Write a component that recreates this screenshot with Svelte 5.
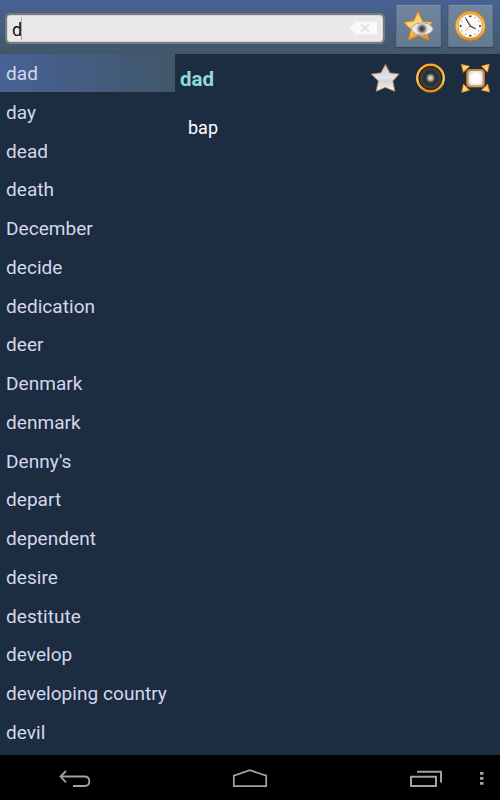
<script>
  let query = "d"
  let selected = "dad"

  const words = [
    "dad", "day", "dead", "death", "December", "decide", "dedication",
    "deer", "Denmark", "denmark", "Denny's", "depart", "dependent",
    "desire", "destitute", "develop", "developing country", "devil"
  ]

  const translations = { dad: "bap" }
  const ticks = [0, 30, 60, 90, 120, 150, 180, 210, 240, 270, 300, 330]
  const corners = [0, 90, 180, 270]
</script>

<svg class="defs" width="0" height="0">
  <defs>
    <linearGradient id="gold" x1="0" y1="0" x2="0.3" y2="1">
      <stop offset="0" stop-color="#ffb024" />
      <stop offset="0.5" stop-color="#ffda7c" />
      <stop offset="1" stop-color="#f39a1b" />
    </linearGradient>
    <linearGradient id="rim" x1="0" y1="0" x2="0" y2="1">
      <stop offset="0" stop-color="#ffa51c" />
      <stop offset="0.55" stop-color="#ffca55" />
      <stop offset="1" stop-color="#f08a10" />
    </linearGradient>
    <linearGradient id="silver" x1="0" y1="0" x2="0" y2="1">
      <stop offset="0" stop-color="#c9cacc" />
      <stop offset="0.5" stop-color="#e4e4e5" />
      <stop offset="0.6" stop-color="#d2d3d5" />
      <stop offset="1" stop-color="#f4f4f4" />
    </linearGradient>
    <radialGradient id="iris">
      <stop offset="0" stop-color="#333" />
      <stop offset="0.4" stop-color="#555" />
      <stop offset="0.65" stop-color="#999" />
      <stop offset="1" stop-color="#d8d8d8" />
    </radialGradient>
    <radialGradient id="cone">
      <stop offset="0" stop-color="#eee" />
      <stop offset="0.6" stop-color="#aaa" />
      <stop offset="1" stop-color="#666" />
    </radialGradient>
    <radialGradient id="panel">
      <stop offset="0.5" stop-color="#fff" />
      <stop offset="1" stop-color="#dcdce4" />
    </radialGradient>
  </defs>
</svg>

<div class="screen">
  <header>
    <div class="search">
      <span class="query">{query}</span><span class="caret"></span>
      <svg class="clear" width="28" height="14" viewBox="0 0 28 14">
        <path d="M0.500 7 7 0.500H28V13.500H7Z" fill="#fafafa" />
        <path d="m12 3.200 8 7.600m0-7.600-8 7.600" stroke="#dedede" stroke-width="1.600" />
      </svg>
    </div>
    <button class="tool" aria-label="Favorites">
      <svg width="32" height="32" viewBox="0 0 32 32">
        <path d="M15 1 19.500 11.200 29.500 12.200 24 19.500 26 30.300 15.200 25.500 5.200 30.300 7.800 19.500 0.800 12.200 10.700 10.800Z" fill="url(#gold)" stroke="#cc7626" stroke-width="0.800" />
        <path d="M8 18.800Q11 12.800 19 12.800T30.300 18.800Q28 25 19 25T8 18.800Z" fill="#e9e9e9" stroke="#999" stroke-width="0.900" />
        <circle cx="19" cy="18.800" r="5.600" fill="url(#iris)" />
      </svg>
    </button>
    <button class="tool" aria-label="History">
      <svg width="32" height="32" viewBox="0 0 32 32">
        <circle cx="15.300" cy="16" r="13.600" fill="#fafafa" stroke="url(#rim)" stroke-width="2.800" />
        <circle cx="15.300" cy="16" r="15" fill="none" stroke="#bf741b" stroke-width="0.500" />
        <circle cx="15.300" cy="16" r="12.200" fill="none" stroke="#b4782e" stroke-width="0.600" />
        {#each ticks as angle}
          <path
            d="M15.300 5.500v1.600"
            stroke="#333"
            stroke-width={angle % 90 === 0 ? 2.2 : 0.5}
            transform="rotate({angle} 15.3 16)"
          />
        {/each}
        <path d="m16.500 14.500-6.500 6.500" stroke="#f58e75" stroke-width="0.800" />
        <path d="M10.700 8.500 15.500 16.300 20.700 18.700" fill="none" stroke="#333" stroke-width="1.200" />
      </svg>
    </button>
  </header>

  <main>
    <ul>
      {#each words as word}
        <li class:selected={word === selected}>{word}</li>
      {/each}
    </ul>
    <section>
      <div class="heading">
        <h1>{selected}</h1>
        <div class="actions">
          <svg width="30" height="30" viewBox="0 0 30 30">
            <path d="M15.500 1.200 19.900 9.800 29.300 10.900 23 18 25 28.500 15.300 24.500 6 28.500 8.200 18 1.200 10.900 10.800 9.800Z" fill="url(#silver)" stroke="#a66c38" stroke-width="0.800" />
          </svg>
          <svg width="30" height="30" viewBox="0 0 30 30">
            <circle cx="15.500" cy="15" r="13.200" fill="#3b3b3c" stroke="url(#rim)" stroke-width="2.500" />
            <circle cx="15.500" cy="15" r="11.500" fill="none" stroke="#17191d" stroke-width="0.900" />
            <circle cx="15.500" cy="15" r="6.500" fill="none" stroke="#2c2c2e" stroke-width="2" />
            <circle cx="15.500" cy="15" r="3.900" fill="url(#cone)" />
          </svg>
          <svg width="30" height="30" viewBox="0 0 30 30">
            {#each corners as angle}
              <path
                d="M1.300 1.300 9.600 3.200 3.400 9.400Z"
                fill="url(#gold)"
                stroke="#d8862a"
                stroke-width="0.600"
                transform="rotate({angle} 15.5 15.2)"
              />
            {/each}
            <rect x="7.300" y="7" width="16.500" height="16.500" rx="3" fill="url(#panel)" stroke="#b66b1e" stroke-width="2.200" />
            <rect x="7.300" y="7" width="16.500" height="16.500" rx="3" fill="none" stroke="#f0ab55" stroke-width="0.800" />
          </svg>
        </div>
      </div>
      <p>{translations[selected]}</p>
    </section>
  </main>

  <nav>
    <svg width="500" height="45" viewBox="0 0 500 45" fill="none" stroke="#a2a2a2">
      <path d="M61 21.500H84.500Q89.300 21.500 89.300 26.200T84.500 31H73" stroke-width="1.800" />
      <path d="m66 16-5.500 5.500 5.500 5.800" stroke-width="1.800" />
      <path d="M233.800 31.200V20.700L250 15.200 266.200 20.700V31.200Z" stroke-width="1.700" />
      <path d="M411 21.700H436V31H411Z" stroke-width="2" />
      <path d="M417 16.800H441V27.500" stroke-width="2" />
      <path d="M480 18.300h3.500m-3.500 5h3.500m-3.500 5h3.500" stroke-width="2.800" />
    </svg>
  </nav>
</div>

<style>
  :global(body) {
    margin: 0;
    background: #000;
  }
  .defs {
    position: absolute;
  }
  .screen {
    width: 500px;
    height: 800px;
    display: flex;
    flex-direction: column;
    overflow: hidden;
    background: #1c2c41;
    font-family: Roboto, sans-serif;
  }
  header {
    height: 54px;
    flex: none;
    box-sizing: border-box;
    display: flex;
    align-items: flex-start;
    padding: 5px 7px 0 5px;
    background: linear-gradient(#486296, #415769);
  }
  .search {
    box-sizing: border-box;
    width: 380px;
    height: 31px;
    margin: 8px 11px 0 0;
    padding: 0 6px 0 5px;
    display: flex;
    align-items: center;
    border: 2px solid #777b80;
    border-radius: 5px;
    background: #e9e9e9;
    box-shadow: inset 0 0 1px #333;
    color: #111;
    font-size: 18px;
  }
  .query {
    line-height: 27px;
    padding-top: 1px;
    margin-right: -1px;
  }
  .caret {
    width: 1px;
    height: 23px;
    background: #aaa;
  }
  .clear {
    margin-left: auto;
    margin-top: -1px;
  }
  .tool {
    box-sizing: border-box;
    width: 45px;
    height: 42px;
    margin: 0 7px 0 0;
    padding: 0;
    display: flex;
    align-items: center;
    justify-content: center;
    border: 1px solid #60758c;
    border-top-color: #8093ab;
    background: linear-gradient(#71859f, #657b8f);
    box-shadow: 0 1px 1px #33475c;
  }
  .tool:last-child {
    margin-right: 0;
  }
  main {
    flex: 1;
    min-height: 0;
    display: flex;
    overflow: hidden;
  }
  ul {
    width: 175px;
    flex: none;
    margin: 0;
    padding: 0;
    list-style: none;
  }
  li {
    box-sizing: border-box;
    height: 38.76px;
    padding-left: 6px;
    border-bottom: 1px solid #232930;
    color: #d5d7ec;
    font-size: 19px;
    letter-spacing: 0.05px;
    line-height: 39.6px;
    white-space: nowrap;
  }
  li.selected {
    background: linear-gradient(90deg, #486296, #415769);
  }
  section {
    flex: 1;
  }
  .heading {
    height: 48px;
    display: flex;
    align-items: center;
    justify-content: space-between;
    padding: 0 10px 0 5px;
  }
  h1 {
    margin: 0;
    padding-top: 2px;
    color: #93dade;
    font-size: 20.5px;
    line-height: 24px;
  }
  .actions {
    display: flex;
    gap: 15px;
  }
  p {
    margin: 14px 0 0 13px;
    color: #fff;
    font-size: 18px;
    line-height: 24px;
  }
  nav {
    height: 45px;
    flex: none;
    background: #000;
  }
  nav svg {
    display: block;
  }
</style>
